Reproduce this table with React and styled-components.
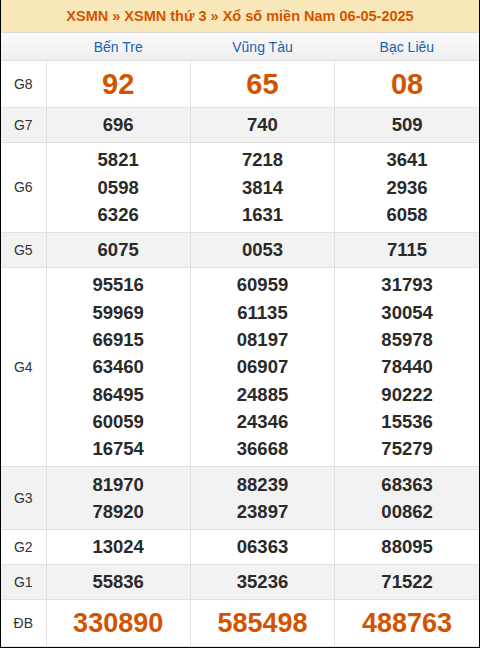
import React from "react";
import styled, { createGlobalStyle } from "styled-components";

const GlobalStyle = createGlobalStyle`
  body {
    margin: 0;
    background: #fff;
    font-family: "Liberation Sans", Arial, sans-serif;
  }
`;

const Wrapper = styled.div`
  width: 480px;
  height: 648px;
  box-sizing: border-box;
  border: 1px solid #000;
  border-top: none;
  overflow: hidden;
`;

const Title = styled.div`
  height: 32px;
  line-height: 32px;
  background: #f8e8b9;
  border-bottom: 1px solid #d9d9d9;
  text-align: center;
  color: #d25400;
  font-weight: bold;
  font-size: 14.5px;
`;

const Table = styled.table`
  width: 100%;
  border-collapse: collapse;
  table-layout: fixed;
`;

const HeadCell = styled.th`
  height: 27px;
  padding: 0;
  border-bottom: 1px solid #dedede;
  background: linear-gradient(#fafafa, #efefef);
  color: #1a5fb0;
  font-size: 14px;
  font-weight: normal;
  text-align: center;
`;

const Row = styled.tr`
  background: ${(p) => (p.$shade ? "#f2f2f2" : "#fff")};
`;

const Label = styled.td`
  width: 45px;
  padding: 0;
  border-right: 1px solid #e0e0e0;
  border-bottom: 1px solid #e0e0e0;
  text-align: center;
  font-size: 14px;
  color: #333;
`;

const Cell = styled.td`
  padding: 3.5px 0;
  border-right: 1px solid #e0e0e0;
  border-bottom: 1px solid #e0e0e0;
  text-align: center;
  vertical-align: middle;
  &:last-child {
    border-right: none;
  }
`;

const Num = styled.div`
  font-weight: bold;
  font-size: ${(p) => p.$size || "18.5px"};
  line-height: ${(p) => (p.$size ? "38.5px" : "27.3px")};
  color: ${(p) => (p.$size ? "#d25400" : "#2a2a2a")};
`;

const provinces = ["Bến Tre", "Vũng Tàu", "Bạc Liêu"];

const prizes = [
  { name: "G8", size: "29px", vals: [["92"], ["65"], ["08"]] },
  { name: "G7", vals: [["696"], ["740"], ["509"]] },
  {
    name: "G6",
    vals: [
      ["5821", "0598", "6326"],
      ["7218", "3814", "1631"],
      ["3641", "2936", "6058"],
    ],
  },
  { name: "G5", vals: [["6075"], ["0053"], ["7115"]] },
  {
    name: "G4",
    vals: [
      ["95516", "59969", "66915", "63460", "86495", "60059", "16754"],
      ["60959", "61135", "08197", "06907", "24885", "24346", "36668"],
      ["31793", "30054", "85978", "78440", "90222", "15536", "75279"],
    ],
  },
  {
    name: "G3",
    vals: [
      ["81970", "78920"],
      ["88239", "23897"],
      ["68363", "00862"],
    ],
  },
  { name: "G2", vals: [["13024"], ["06363"], ["88095"]] },
  { name: "G1", vals: [["55836"], ["35236"], ["71522"]] },
  { name: "ĐB", size: "27px", vals: [["330890"], ["585498"], ["488763"]] },
];

export default function App() {
  return (
    <>
      <GlobalStyle />
      <Wrapper>
        <Title>XSMN » XSMN thứ 3 » Xổ số miền Nam 06-05-2025</Title>
        <Table>
          <colgroup>
            <col style={{ width: 45 }} />
            <col />
            <col />
            <col />
          </colgroup>
          <thead>
            <tr>
              <HeadCell />
              {provinces.map((p) => (
                <HeadCell key={p}>{p}</HeadCell>
              ))}
            </tr>
          </thead>
          <tbody>
            {prizes.map((prize, i) => (
              <Row key={prize.name} $shade={i % 2 === 1}>
                <Label>{prize.name}</Label>
                {prize.vals.map((list, j) => (
                  <Cell key={j}>
                    {list.map((v, k) => (
                      <Num key={k} $size={prize.size}>
                        {v}
                      </Num>
                    ))}
                  </Cell>
                ))}
              </Row>
            ))}
          </tbody>
        </Table>
      </Wrapper>
    </>
  );
}
